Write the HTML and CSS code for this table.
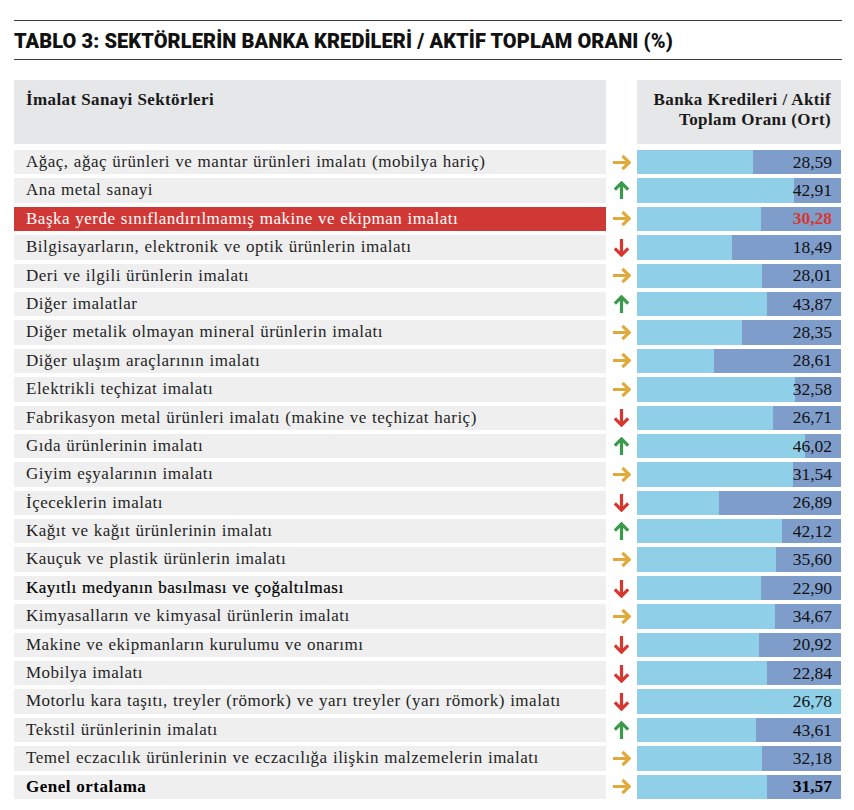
FILE: index.html
```html
<!DOCTYPE html>
<html lang="tr">
<head>
<meta charset="utf-8">
<link rel="stylesheet" href="styles.css">
</head>
<body>
<div class="page">
  <h1 class="title">TABLO 3: SEKTÖRLERİN BANKA KREDİLERİ / AKTİF TOPLAM ORANI (%)</h1>
  <div class="table">
    <div class="head head-left">İmalat Sanayi Sektörleri</div>
    <div class="head-gap"></div>
    <div class="head head-right">Banka Kredileri / Aktif<br>Toplam Oranı (Ort)</div>

    <div class="name">Ağaç, ağaç ürünleri ve mantar ürünleri imalatı (mobilya hariç)</div>
    <div class="arrow"><svg class="ico right" viewBox="0 0 20 20"><path d="M1 10H18M11 3L18 10L11 17"/></svg></div>
    <div class="bar"><div class="fill" style="width:57.1%"></div><span class="val">28,59</span></div>

    <div class="name">Ana metal sanayi</div>
    <div class="arrow"><svg class="ico up" viewBox="0 0 20 20"><path d="M10 19V2M3 9L10 2L17 9"/></svg></div>
    <div class="bar"><div class="fill" style="width:76.8%"></div><span class="val">42,91</span></div>

    <div class="name hl">Başka yerde sınıflandırılmamış makine ve ekipman imalatı</div>
    <div class="arrow"><svg class="ico right" viewBox="0 0 20 20"><path d="M1 10H18M11 3L18 10L11 17"/></svg></div>
    <div class="bar"><div class="fill" style="width:60.6%"></div><span class="val red">30,28</span></div>

    <div class="name">Bilgisayarların, elektronik ve optik ürünlerin imalatı</div>
    <div class="arrow"><svg class="ico down" viewBox="0 0 20 20"><path d="M10 1V18M3 11L10 18L17 11"/></svg></div>
    <div class="bar"><div class="fill" style="width:46.8%"></div><span class="val">18,49</span></div>

    <div class="name">Deri ve ilgili ürünlerin imalatı</div>
    <div class="arrow"><svg class="ico right" viewBox="0 0 20 20"><path d="M1 10H18M11 3L18 10L11 17"/></svg></div>
    <div class="bar"><div class="fill" style="width:61.1%"></div><span class="val">28,01</span></div>

    <div class="name">Diğer imalatlar</div>
    <div class="arrow"><svg class="ico up" viewBox="0 0 20 20"><path d="M10 19V2M3 9L10 2L17 9"/></svg></div>
    <div class="bar"><div class="fill" style="width:63.5%"></div><span class="val">43,87</span></div>

    <div class="name">Diğer metalik olmayan mineral ürünlerin imalatı</div>
    <div class="arrow"><svg class="ico right" viewBox="0 0 20 20"><path d="M1 10H18M11 3L18 10L11 17"/></svg></div>
    <div class="bar"><div class="fill" style="width:51.7%"></div><span class="val">28,35</span></div>

    <div class="name">Diğer ulaşım araçlarının imalatı</div>
    <div class="arrow"><svg class="ico right" viewBox="0 0 20 20"><path d="M1 10H18M11 3L18 10L11 17"/></svg></div>
    <div class="bar"><div class="fill" style="width:37.9%"></div><span class="val">28,61</span></div>

    <div class="name">Elektrikli teçhizat imalatı</div>
    <div class="arrow"><svg class="ico right" viewBox="0 0 20 20"><path d="M1 10H18M11 3L18 10L11 17"/></svg></div>
    <div class="bar"><div class="fill" style="width:77.3%"></div><span class="val">32,58</span></div>

    <div class="name">Fabrikasyon metal ürünleri imalatı (makine ve teçhizat hariç)</div>
    <div class="arrow"><svg class="ico down" viewBox="0 0 20 20"><path d="M10 1V18M3 11L10 18L17 11"/></svg></div>
    <div class="bar"><div class="fill" style="width:66.5%"></div><span class="val">26,71</span></div>

    <div class="name">Gıda ürünlerinin imalatı</div>
    <div class="arrow"><svg class="ico up" viewBox="0 0 20 20"><path d="M10 19V2M3 9L10 2L17 9"/></svg></div>
    <div class="bar"><div class="fill" style="width:82.3%"></div><span class="val">46,02</span></div>

    <div class="name">Giyim eşyalarının imalatı</div>
    <div class="arrow"><svg class="ico right" viewBox="0 0 20 20"><path d="M1 10H18M11 3L18 10L11 17"/></svg></div>
    <div class="bar"><div class="fill" style="width:76.4%"></div><span class="val">31,54</span></div>

    <div class="name">İçeceklerin imalatı</div>
    <div class="arrow"><svg class="ico down" viewBox="0 0 20 20"><path d="M10 1V18M3 11L10 18L17 11"/></svg></div>
    <div class="bar"><div class="fill" style="width:40.4%"></div><span class="val">26,89</span></div>

    <div class="name">Kağıt ve kağıt ürünlerinin imalatı</div>
    <div class="arrow"><svg class="ico up" viewBox="0 0 20 20"><path d="M10 19V2M3 9L10 2L17 9"/></svg></div>
    <div class="bar"><div class="fill" style="width:70.9%"></div><span class="val">42,12</span></div>

    <div class="name">Kauçuk ve plastik ürünlerin imalatı</div>
    <div class="arrow"><svg class="ico right" viewBox="0 0 20 20"><path d="M1 10H18M11 3L18 10L11 17"/></svg></div>
    <div class="bar"><div class="fill" style="width:68%"></div><span class="val">35,60</span></div>

    <div class="name semi">Kayıtlı medyanın basılması ve çoğaltılması</div>
    <div class="arrow"><svg class="ico down" viewBox="0 0 20 20"><path d="M10 1V18M3 11L10 18L17 11"/></svg></div>
    <div class="bar"><div class="fill" style="width:60.6%"></div><span class="val">22,90</span></div>

    <div class="name">Kimyasalların ve kimyasal ürünlerin imalatı</div>
    <div class="arrow"><svg class="ico right" viewBox="0 0 20 20"><path d="M1 10H18M11 3L18 10L11 17"/></svg></div>
    <div class="bar"><div class="fill" style="width:67.5%"></div><span class="val">34,67</span></div>

    <div class="name">Makine ve ekipmanların kurulumu ve onarımı</div>
    <div class="arrow"><svg class="ico down" viewBox="0 0 20 20"><path d="M10 1V18M3 11L10 18L17 11"/></svg></div>
    <div class="bar"><div class="fill" style="width:59.6%"></div><span class="val">20,92</span></div>

    <div class="name">Mobilya imalatı</div>
    <div class="arrow"><svg class="ico down" viewBox="0 0 20 20"><path d="M10 1V18M3 11L10 18L17 11"/></svg></div>
    <div class="bar"><div class="fill" style="width:63.5%"></div><span class="val">22,84</span></div>

    <div class="name">Motorlu kara taşıtı, treyler (römork) ve yarı treyler (yarı römork) imalatı</div>
    <div class="arrow"><svg class="ico down" viewBox="0 0 20 20"><path d="M10 1V18M3 11L10 18L17 11"/></svg></div>
    <div class="bar"><div class="fill" style="width:100%"></div><span class="val">26,78</span></div>

    <div class="name">Tekstil ürünlerinin imalatı</div>
    <div class="arrow"><svg class="ico up" viewBox="0 0 20 20"><path d="M10 19V2M3 9L10 2L17 9"/></svg></div>
    <div class="bar"><div class="fill" style="width:58.1%"></div><span class="val">43,61</span></div>

    <div class="name">Temel eczacılık ürünlerinin ve eczacılığa ilişkin malzemelerin imalatı</div>
    <div class="arrow"><svg class="ico right" viewBox="0 0 20 20"><path d="M1 10H18M11 3L18 10L11 17"/></svg></div>
    <div class="bar"><div class="fill" style="width:61.1%"></div><span class="val">32,18</span></div>

    <div class="name bold">Genel ortalama</div>
    <div class="arrow"><svg class="ico right" viewBox="0 0 20 20"><path d="M1 10H18M11 3L18 10L11 17"/></svg></div>
    <div class="bar"><div class="fill" style="width:63.5%"></div><span class="val bold">31,57</span></div>
  </div>
</div>
</body>
</html>
```

FILE: styles.css
```css
html, body {
  margin: 0;
  padding: 0;
  background: #ffffff;
}

body {
  font-family: "Liberation Serif", "Times New Roman", serif;
  color: #1a1a1a;
}

.page {
  width: 828px;
  margin-left: 14px;
  padding-top: 20px;
}

.title {
  margin: 0;
  height: 37px;
  border-top: 1.5px solid #3a3a3a;
  border-bottom: 1.5px solid #3a3a3a;
  display: flex;
  align-items: center;
  font-family: Roboto, "Liberation Sans", sans-serif;
  font-weight: 900;
  font-size: 20px;
  letter-spacing: 0.1px;
  color: #111;
  padding-top: 1px;
}

.table {
  margin-top: 20px;
  display: grid;
  grid-template-columns: 592px 31px 204px;
  grid-template-rows: 66px;
  grid-auto-rows: 24.4px;
  row-gap: 4px;
}

.head {
  background: #e6e7e8;
  height: 64px;
  font-weight: bold;
  font-size: 17px;
  letter-spacing: 0.4px;
  color: #1a1a1a;
  box-sizing: border-box;
}

.head-left {
  padding: 10px 12px;
}

.head-right {
  text-align: right;
  padding: 10px 10px 0 0;
  line-height: 20px;
}

.name {
  background: #efefef;
  font-size: 17px;
  letter-spacing: 0.5px;
  word-spacing: 0.5px;
  line-height: 24.4px;
  padding-left: 12px;
  white-space: nowrap;
  color: #1f1f1f;
}

.name.hl {
  background: #d03835;
  color: #ffffff;
}

.name.semi {
  color: #000;
  -webkit-text-stroke: 0.2px #000;
}

.name.bold, .val.bold {
  font-weight: bold;
  color: #000;
}

.arrow {
  display: flex;
  align-items: center;
  justify-content: center;
}

.ico {
  width: 19px;
  height: 19px;
  fill: none;
  stroke-width: 3.4;
  stroke-linecap: butt;
  stroke-linejoin: miter;
}

.ico.right { stroke: #e0a93b; }
.ico.up { stroke: #3c9a4b; }
.ico.down { stroke: #d6382f; }

.bar {
  background: #7f9dcb;
  display: flex;
  align-items: center;
  justify-content: flex-end;
  position: relative;
}

.fill {
  position: absolute;
  left: 0;
  top: 0;
  bottom: 0;
  background: #8fcfe8;
}

.val {
  position: relative;
  font-size: 17.5px;
  padding-right: 9px;
  color: #111;
}

.val.red {
  color: #d6382f;
  font-weight: bold;
}
```
